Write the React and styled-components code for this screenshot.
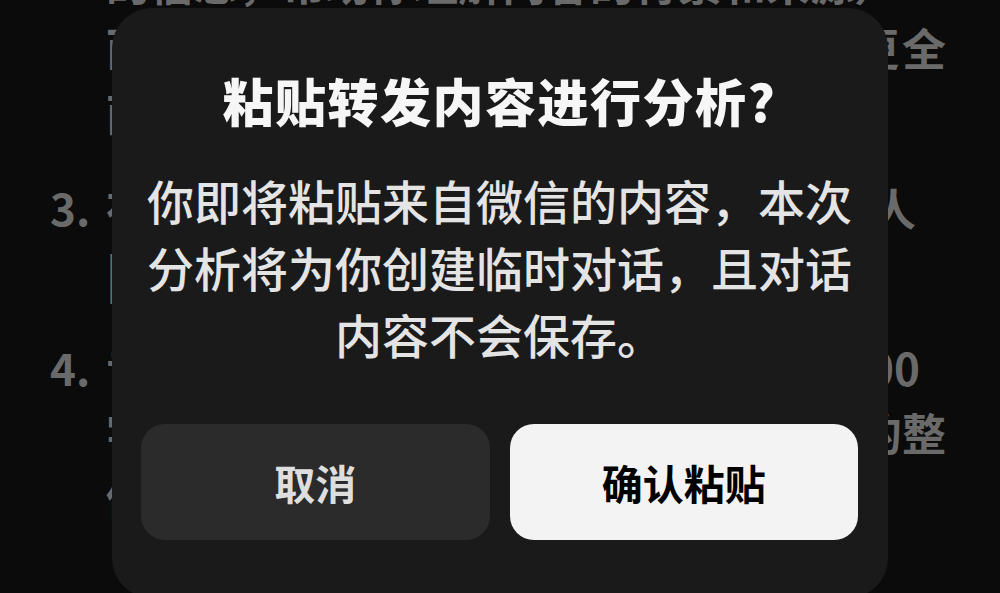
import React from 'react'
import styled, { createGlobalStyle } from 'styled-components'

const GlobalStyle = createGlobalStyle`
  html, body {
    margin: 0;
    padding: 0;
    background: #0b0b0b;
  }
  body {
    width: 1000px;
    height: 593px;
    overflow: hidden;
    font-family: "Noto Sans CJK SC", "Noto Sans", sans-serif;
  }
`

const Screen = styled.div`
  position: relative;
  width: 1000px;
  height: 593px;
  overflow: hidden;
  background: #0b0b0b;
`

const Article = styled.ol`
  list-style: none;
  margin: -50px 0 0;
  padding: 0 0 0 50px;
  color: #6a6a6a;
  font-size: 44px;
  font-weight: 700;
  line-height: 65px;
`

const Item = styled.li`
  display: flex;
  & + & {
    margin-top: 30px;
  }
`

const Num = styled.span`
  width: 56px;
  flex: none;
`

const Lines = styled.div`
  display: flex;
  flex-direction: column;
`

const Line = styled.div`
  width: ${p => p.$width}px;
  white-space: nowrap;
  overflow: hidden;
  text-align: ${p => (p.$short ? 'left' : 'justify')};
  text-align-last: ${p => (p.$short ? 'left' : 'justify')};
`

const Dialog = styled.section`
  position: absolute;
  left: 112px;
  top: 8px;
  width: 776px;
  height: 590px;
  box-sizing: border-box;
  padding: 62px 30px 0 29px;
  background: #1a1a1a;
  border-radius: 40px;
  display: flex;
  flex-direction: column;
  align-items: center;
`

const Title = styled.h2`
  margin: 0;
  font-size: 51px;
  line-height: 60px;
  font-weight: 900;
  color: #f6f6f6;
  letter-spacing: 1.5px;
`

const Message = styled.p`
  margin: 36px 0 0;
  font-size: 47px;
  line-height: 67px;
  font-weight: 500;
  color: #e4e4e4;
  text-align: center;
`

const Actions = styled.div`
  margin-top: 57px;
  align-self: stretch;
  display: grid;
  grid-template-columns: 1fr 1fr;
  gap: 20px;
`

const Button = styled.button`
  height: 116px;
  border: 0;
  border-radius: 24px;
  font-family: inherit;
  font-size: 41px;
  font-weight: 700;
  background: ${p => (p.$primary ? '#f3f3f3' : '#2b2b2b')};
  color: ${p => (p.$primary ? '#000' : '#dedede')};
`

const App = () => {
  return (
    <Screen>
      <GlobalStyle />
      <Article>
        <Item>
          <Num />
          <Lines>
            <Line $width={780}>的信息，帮助你理解内容的背景和来源）</Line>
            <Line $width={840}>而是从多个角度进行分析，让你看到更全</Line>
            <Line $short>面的信息。</Line>
          </Lines>
        </Item>
        <Item>
          <Num>3.</Num>
          <Lines>
            <Line $width={810}>在对话中可以继续追问，系统会结合个人</Line>
            <Line $short>|回答你的问题。</Line>
          </Lines>
        </Item>
        <Item>
          <Num>4.</Num>
          <Lines>
            <Line $width={814}>专注内容支持一键导出，单次最多 2000</Line>
            <Line $width={840}>字，超出部分将被截断，建议保证结果的整</Line>
            <Line $short>体性。</Line>
          </Lines>
        </Item>
      </Article>

      <Dialog>
        <Title>粘贴转发内容进行分析?</Title>
        <Message>
          你即将粘贴来自微信的内容，本次分析将为你创建临时对话，且对话内容不会保存。
        </Message>
        <Actions>
          <Button>取消</Button>
          <Button $primary>确认粘贴</Button>
        </Actions>
      </Dialog>
    </Screen>
  )
}

export default App
